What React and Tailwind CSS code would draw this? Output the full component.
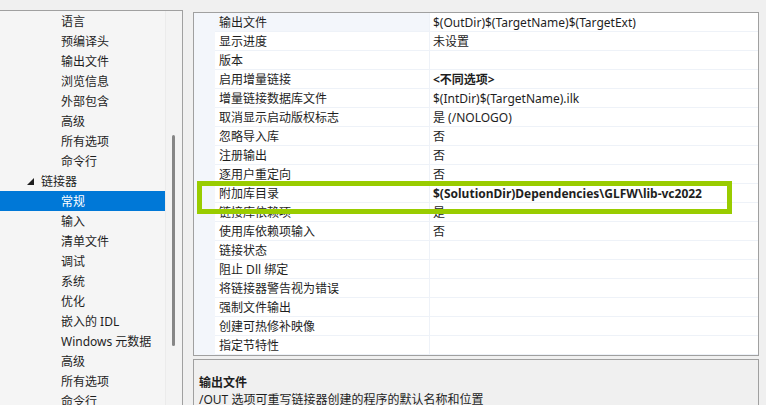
import React from 'react';

const treeItems = [
  { label: '语言' },
  { label: '预编译头' },
  { label: '输出文件' },
  { label: '浏览信息' },
  { label: '外部包含' },
  { label: '高级' },
  { label: '所有选项' },
  { label: '命令行' },
  { label: '链接器', group: true },
  { label: '常规', selected: true },
  { label: '输入' },
  { label: '清单文件' },
  { label: '调试' },
  { label: '系统' },
  { label: '优化' },
  { label: '嵌入的 IDL' },
  { label: 'Windows 元数据' },
  { label: '高级' },
  { label: '所有选项' },
  { label: '命令行' },
];

const props = [
  { name: '输出文件', value: '$(OutDir)$(TargetName)$(TargetExt)', current: true },
  { name: '显示进度', value: '未设置' },
  { name: '版本', value: '' },
  { name: '启用增量链接', value: '<不同选项>', bold: true },
  { name: '增量链接数据库文件', value: '$(IntDir)$(TargetName).ilk' },
  { name: '取消显示启动版权标志', value: '是 (/NOLOGO)' },
  { name: '忽略导入库', value: '否' },
  { name: '注册输出', value: '否' },
  { name: '逐用户重定向', value: '否' },
  { name: '附加库目录', value: '$(SolutionDir)Dependencies\\GLFW\\lib-vc2022', bold: true },
  { name: '链接库依赖项', value: '是' },
  { name: '使用库依赖项输入', value: '否' },
  { name: '链接状态', value: '' },
  { name: '阻止 Dll 绑定', value: '' },
  { name: '将链接器警告视为错误', value: '' },
  { name: '强制文件输出', value: '' },
  { name: '创建可热修补映像', value: '' },
  { name: '指定节特性', value: '' },
];

function Tree() {
  return (
    <div className="mt-[10px] w-[183px] shrink-0 border-t border-r border-[#a0a0a0] bg-[#f5f5f5] flex">
      <div className="w-[165px] flex flex-col">
        {treeItems.map((item, i) => (
          <div
            key={i}
            className={`h-[20px] leading-[20px] pt-[1px] whitespace-nowrap flex items-center ${
              item.selected ? 'bg-[#0078d7] text-white' : 'text-[#1e1e1e]'
            } ${item.group ? 'pl-[27px]' : 'pl-[61px]'}`}
          >
            {item.group && (
              <svg width="7" height="7" viewBox="0 0 7 7" className="mr-[7px]">
                <polygon points="7,0 7,7 0,7" fill="#1e1e1e" />
              </svg>
            )}
            {item.label}
          </div>
        ))}
      </div>
      <div className="w-[17px] border-l border-[#ebebeb] bg-[#f3f3f3] pt-[124px]">
        <div className="ml-[6px] w-[3px] h-[211px] rounded-full bg-[#868686]" />
      </div>
    </div>
  );
}

function Grid() {
  return (
    <div className="relative h-[358px] border border-[#a0a0a0] bg-white">
      {props.map((p, i) => (
        <div key={i} className="flex h-[19px] leading-[17px]">
          <div className="w-[21px] shrink-0 bg-[#f3f6fb]" />
          <div
            className={`w-[215px] shrink-0 pl-[4px] pt-[1px] border-b border-r border-[#eef2f8] whitespace-nowrap ${
              p.current ? 'bg-[#f3f6fb]' : ''
            }`}
          >
            {p.name}
          </div>
          <div
            className={`flex-1 pl-[3px] pt-[1px] border-b border-[#eef2f8] whitespace-nowrap ${
              p.bold ? 'font-bold' : ''
            }`}
          >
            {p.value}
          </div>
        </div>
      ))}
      <div className="absolute left-[3px] top-[168px] w-[535px] h-[33px] border-[5px] border-[#99cc00]" />
    </div>
  );
}

export default function App() {
  return (
    <div
      className="h-[405px] w-[766px] overflow-hidden bg-[#f0f0f0] flex text-[12px] text-[#1e1e1e]"
      style={{ fontFamily: '"Noto Sans", "Noto Sans CJK SC", sans-serif' }}
    >
      <Tree />
      <div className="ml-[10px] mt-[12px] w-[566px] flex flex-col gap-[3px]">
        <Grid />
        <div className="flex-1 border border-[#a0a0a0] bg-[#f0f0f0] px-[5px] pt-[14px] leading-[17px]">
          <div className="font-bold">输出文件</div>
          <div className="whitespace-nowrap">/OUT 选项可重写链接器创建的程序的默认名称和位置</div>
        </div>
      </div>
    </div>
  );
}
